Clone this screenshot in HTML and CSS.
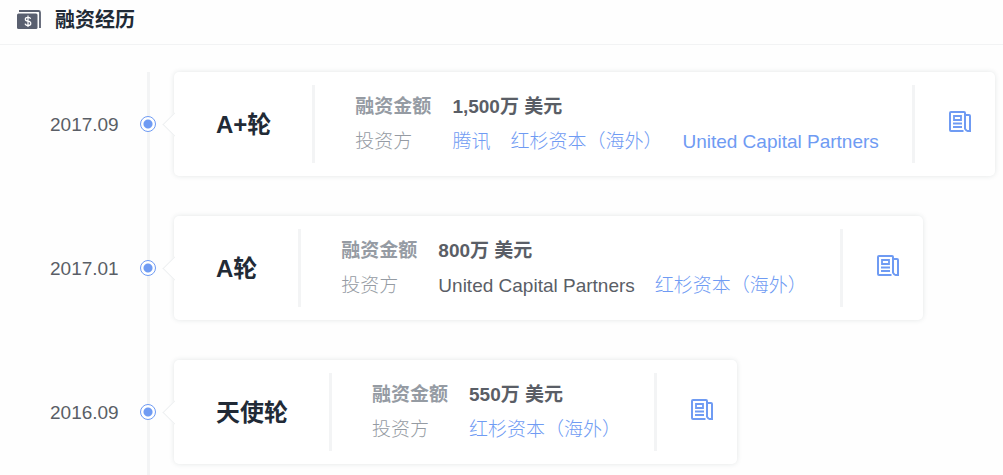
FILE: index.html
```html
<!DOCTYPE html>
<html lang="zh-CN">
<head>
    <meta charset="UTF-8">
    <meta name="viewport" content="width=device-width, initial-scale=1.0">
    <title>融资经历</title>
    <link rel="stylesheet" href="styles.css">
</head>
<body>
    <!-- Shared icon -->
    <svg class="sprite" aria-hidden="true">
        <symbol id="news" viewBox="0 0 22 22">
            <path d="M14.5 20H2Q1 20 1 19V2Q1 1 2 1H15Q16 1 16 2V18.5M16 4H20Q21 4 21 5V20H18.5Q17 20 16.5 18" fill="none" stroke="currentColor" stroke-width="2"/>
            <path d="M5 5H12V9H5ZM4 12.5H13M4 16H13" fill="none" stroke="currentColor" stroke-width="1.8"/>
        </symbol>
    </svg>

    <header class="header">
        <svg class="header-icon" viewBox="0 0 24 20" aria-hidden="true">
            <path d="M2 1H21.5Q23 1 23 2.5V18" fill="none" stroke="#5a6070" stroke-width="1.8"/>
            <rect x="0" y="3.5" width="20.5" height="15.5" rx="1.5" fill="#5a6070"/>
            <path d="M13.6 8.8Q13.3 7.3 11 7.3Q8.3 7.3 8.3 9.3Q8.3 10.9 11 11.2Q13.8 11.6 13.8 13.4Q13.8 15.4 11 15.4Q8.4 15.4 8.1 13.6M11 5.6V17" fill="none" stroke="#fff" stroke-width="1.2"/>
        </svg>
        <h1>融资经历</h1>
    </header>

    <ol class="timeline">
        <li class="item">
            <time class="date" datetime="2017-09">2017.09</time>
            <span class="dot"></span>
            <article class="card">
                <h2 class="round">A+轮</h2>
                <dl class="info">
                    <dt class="strong">融资金额</dt>
                    <dd class="strong">1,500万 美元</dd>
                    <dt>投资方</dt>
                    <dd><a href="#">腾讯</a><a href="#">红杉资本（海外）</a><a href="#">United Capital Partners</a></dd>
                </dl>
                <a class="news" href="#" aria-label="相关新闻"><svg><use href="#news"/></svg></a>
            </article>
        </li>
        <li class="item">
            <time class="date" datetime="2017-01">2017.01</time>
            <span class="dot"></span>
            <article class="card">
                <h2 class="round">A轮</h2>
                <dl class="info">
                    <dt class="strong">融资金额</dt>
                    <dd class="strong">800万 美元</dd>
                    <dt>投资方</dt>
                    <dd><span>United Capital Partners</span><a href="#">红杉资本（海外）</a></dd>
                </dl>
                <a class="news" href="#" aria-label="相关新闻"><svg><use href="#news"/></svg></a>
            </article>
        </li>
        <li class="item">
            <time class="date" datetime="2016-09">2016.09</time>
            <span class="dot"></span>
            <article class="card">
                <h2 class="round">天使轮</h2>
                <dl class="info">
                    <dt class="strong">融资金额</dt>
                    <dd class="strong">550万 美元</dd>
                    <dt>投资方</dt>
                    <dd><a href="#">红杉资本（海外）</a></dd>
                </dl>
                <a class="news" href="#" aria-label="相关新闻"><svg><use href="#news"/></svg></a>
            </article>
        </li>
    </ol>
</body>
</html>
```
FILE: styles.css
```css
* {
    box-sizing: border-box;
}
body {
    margin: 0;
    font-family: "Liberation Sans", "Noto Sans CJK SC", sans-serif;
    font-size: 19px;
    line-height: 35px;
    color: #5a5e66;
    background-color: #fefefe;
}
h1, h2, dl, dd, ol {
    margin: 0;
    padding: 0;
}
a {
    color: #6f9bf3;
    text-decoration: none;
}
.sprite {
    display: none;
}
.header {
    display: flex;
    align-items: center;
    gap: 14px;
    height: 45px;
    padding: 0 17px 4px;
    border-bottom: 1px solid #f2f3f4;
}
.header-icon {
    width: 24px;
    height: 20px;
}
h1 {
    font-size: 20px;
    color: #212a36;
}
.timeline {
    padding-top: 27px;
    list-style: none;
}
.item {
    display: flex;
    position: relative;
    padding-bottom: 40px;
}
.item:last-child {
    padding-bottom: 11px;
}
/* Vertical line behind the dots */
.item::before {
    content: "";
    position: absolute;
    top: 0;
    bottom: 0;
    left: 147px;
    width: 3px;
    background-color: #f3f4f5;
}
.date {
    align-self: center;
    width: 140px;
    padding-left: 50px;
}
.dot {
    position: relative;
    align-self: center;
    width: 16px;
    height: 16px;
    margin-right: 18px;
    border: 1px solid #6f9bf3;
    border-radius: 50%;
    background: radial-gradient(circle, #6f9bf3 4px, #fff 5px);
}
.card {
    display: flex;
    position: relative;
    align-items: center;
    height: 104px;
    padding-left: 42px;
    border-radius: 5px;
    background-color: #fff;
    box-shadow: 0 0 5px rgba(40, 60, 70, 0.13);
}
/* Arrow pointing at the dot */
.card::before {
    content: "";
    position: absolute;
    top: 44px;
    left: -8px;
    width: 16px;
    height: 16px;
    border-left: 1px solid #eef0f1;
    border-bottom: 1px solid #eef0f1;
    background-color: #fff;
    transform: rotate(45deg);
}
.round {
    font-size: 24px;
    color: #212a36;
    white-space: nowrap;
}
.info {
    display: grid;
    grid-template-columns: auto auto;
    align-content: center;
    column-gap: 21px;
    height: 78px;
    margin-left: 41px;
    padding: 0 33px 0 40px;
    border-left: 3px solid #f3f4f5;
    border-right: 3px solid #f3f4f5;
    font-weight: 300;
    white-space: nowrap;
}
.info dt {
    color: #959ba3;
}
.info dd {
    display: flex;
    gap: 20px;
}
.info .strong {
    font-weight: bold;
}
.news {
    display: flex;
    padding: 0 24px 4px 34px;
}
.news svg {
    width: 22px;
    height: 22px;
}
```
